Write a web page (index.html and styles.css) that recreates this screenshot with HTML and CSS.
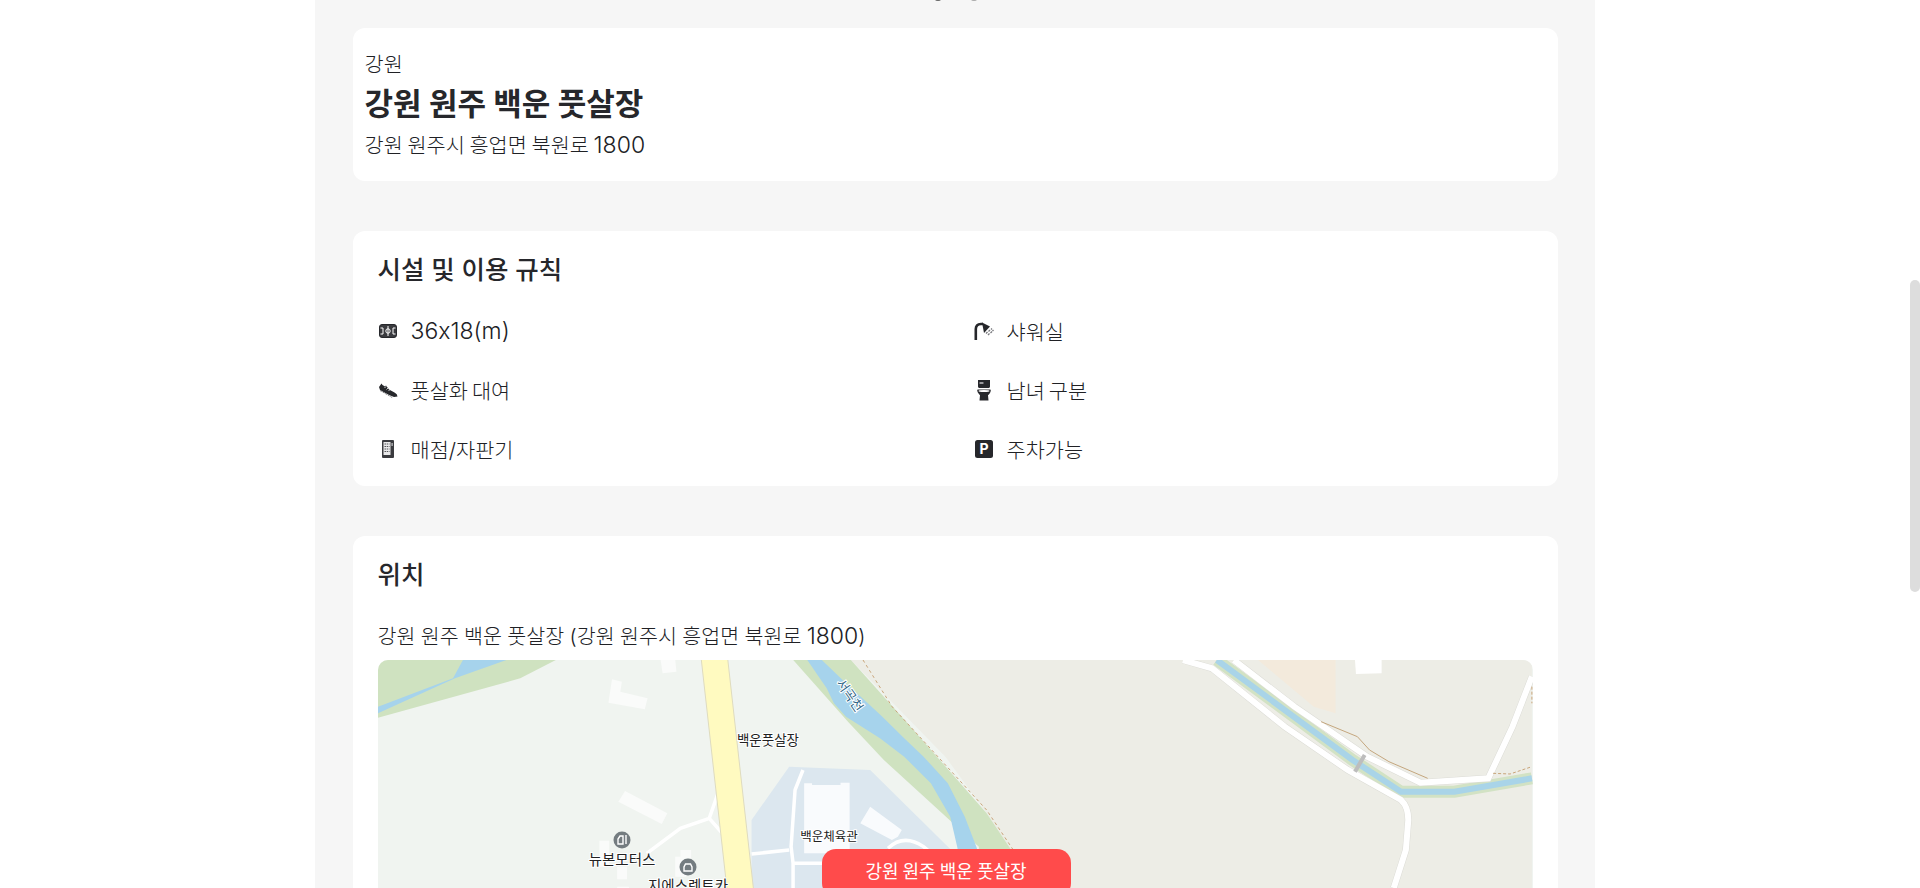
FILE: index.html
```html
<!DOCTYPE html>
<html lang="ko">
<head>
<meta charset="utf-8">
<title>강원 원주 백운 풋살장</title>
<link rel="stylesheet" href="styles.css">
</head>
<body>
<main class="page">
  <div class="clip-marks"><i></i><i></i></div>

  <section class="card head">
    <p class="region">강원</p>
    <h1>강원 원주 백운 풋살장</h1>
    <p class="addr">강원 원주시 흥업면 북원로 <span class="num">1800</span></p>
  </section>

  <section class="card facilities">
    <h2>시설 및 이용 규칙</h2>
    <ul class="grid">
      <li><svg class="ico" viewBox="0 0 20 20"><rect x="1.500" y="3.500" width="17" height="13" rx="2.500" fill="#3a3b3f" stroke="#26272b"/><g fill="none" stroke="#fff" stroke-width="1"><path d="M10 5v10"/><circle cx="10" cy="10" r="2.200"/><path d="M2.500 7h2.500v6H2.500M17.500 7H15v6h2.500"/></g></svg><span class="num">36x18(m)</span></li>
      <li><svg class="ico" viewBox="0 0 20 20"><path d="M1.800 19V8Q1.800 3.200 7 3h2" fill="none" stroke="#26272b" stroke-width="2.600"/><path d="M8 1.500 16 5.500 10 12Z" fill="#26272b"/><path d="M12 12.500l1.500-1.500M14.500 10.500l1.500-1.500M17 8.500l1-1M14 14l1.500-1.500M16.500 12l1.500-1.500M18.500 10l1-1" stroke="#77787c" stroke-width="1.300"/></svg>샤워실</li>
      <li><svg class="ico" viewBox="0 0 20 20"><path d="M1 7 3.500 3.500 4.500 5 7 6.500 8 5.500l3 4 5.500 3q3 1.500 3 4L16 17 11 15 5.500 12 2 10Z" fill="#26272b"/><path d="M6.500 8 8 6.500M8.500 9.500 10 8M10.500 11l1.500-1.500" stroke="#fff" stroke-width=".8"/><path d="M2 10.500 15 18" stroke="#8a8b8e" stroke-width="1" stroke-dasharray="2 1"/></svg>풋살화 대여</li>
      <li><svg class="ico" viewBox="0 0 20 20"><path d="M4 0h12v6.500c0 .8-.6 1.500-1.500 1.500h-9C4.600 8 4 7.300 4 6.500Z" fill="#26272b"/><rect x="5.500" y="2" width="4" height="2" rx=".5" fill="#9a9a9e"/><path d="M4 9.500h12c.5 0 1 .5.700 1.500-.5 2-1.500 3.500-2.700 4.300l.5 5.200h-9l.5-5.200C5.300 14.500 3.800 13 3.300 11c-.3-1 .2-1.500.7-1.500Z" fill="#26272b"/><ellipse cx="10" cy="11" rx="5.500" ry="1" fill="#fff"/></svg>남녀 구분</li>
      <li><svg class="ico" viewBox="0 0 20 20"><rect x="4" y="1" width="12" height="18" rx="1" fill="#3a3b3f"/><rect x="5.500" y="3" width="7" height="13" fill="#e9e9ea"/><path d="M6.500 5h5M6.500 7.500h5M6.500 10h5M6.500 12.500h5" stroke="#55565a" stroke-width="1" stroke-dasharray="1.500 .7"/><rect x="13.500" y="4" width="1.200" height="3" fill="#c9c9cc"/></svg>매점/자판기</li>
      <li><svg class="ico" viewBox="0 0 20 20"><rect x="1" y="1" width="18" height="18" rx="2.500" fill="#26272b"/><text x="10" y="15" class="pk">P</text></svg>주차가능</li>
    </ul>
  </section>

  <section class="card location">
    <h2>위치</h2>
    <p class="place">강원 원주 백운 풋살장 (강원 원주시 흥업면 북원로 <span class="num">1800</span>)</p>
    <div class="map">
      <svg class="map-art" viewBox="0 0 1155 240" aria-hidden="true">
        <rect width="1155" height="240" fill="#f0f4f0"/>
        <g transform="translate(422 -10) scale(.4847 .3333)">
          <path d="M105 30H1510V714H440L385 490 300 320Z" fill="#edede6"/>
          <path d="M945 30H1105V190L1060 170Z" fill="#f3eadc"/>
          <path d="M1145 30H1200V70L1147 72Z" fill="#fff"/>
          <path d="M-14 30H105L210 200 385 490 445 620V714H369V590L173 330 99 215Z" fill="#cfe2c0"/>
          <path d="M15 30H45L95 100 140 160 170 200 215 265 255 320 305 400 340 500 365 595 372 714H325V595L310 500 270 400 215 320 165 265 95 200 70 160 55 115Z" fill="#a6d3ec"/>
          <path d="M130 30 190 170 385 480 440 600" fill="none" stroke="#c9a57a" stroke-width="1" stroke-dasharray="3 3" vector-effect="non-scaling-stroke"/>
          <path d="M860 30 1140 330 1240 425 1350 425 1510 385" fill="none" stroke="#d2e2c4" stroke-width="12" vector-effect="non-scaling-stroke"/>
          <path d="M860 30 1140 330 1240 425 1350 425 1510 385" fill="none" stroke="#a9d4e8" stroke-width="6" vector-effect="non-scaling-stroke"/>
          <path d="M790 30 850 55 1000 230 1130 360 1240 450Q1255 470 1255 510L1250 600 1225 714" fill="none" stroke="#dcdcd6" stroke-width="7" vector-effect="non-scaling-stroke"/>
          <path d="M895 30 1020 170 1170 320 1280 398 1420 385 1470 230 1510 80" fill="none" stroke="#dcdcd6" stroke-width="7" vector-effect="non-scaling-stroke"/>
          <path d="M790 30 850 55 1000 230 1130 360 1240 450Q1255 470 1255 510L1250 600 1225 714" fill="none" stroke="#fff" stroke-width="6" vector-effect="non-scaling-stroke"/>
          <path d="M895 30 1020 170 1170 320 1280 398 1420 385 1470 230 1510 80" fill="none" stroke="#fff" stroke-width="6" vector-effect="non-scaling-stroke"/>
          <path d="M1165 315 1145 365" fill="none" stroke="#bdbdbd" stroke-width="4" vector-effect="non-scaling-stroke"/>
          <path d="M1075 215 1150 260 1175 300 1215 335 1295 385" fill="none" stroke="#c4a67e" stroke-width="1" vector-effect="non-scaling-stroke"/>
          <path d="M1430 370 1465 372 1510 350M1510 110V160" fill="none" stroke="#c9a57a" stroke-width="1" stroke-dasharray="3 2" vector-effect="non-scaling-stroke"/>
        </g>
        <g transform="translate(-8 -10) scale(.3954 .3333)">
          <path d="M20 30H470L380 85 20 203Z" fill="#cfe2c0"/>
          <path d="M20 170 210 85 235 30H345L215 85 20 190Z" fill="#a6d3ec"/>
          <path d="M735 30H772L775 65 740 70ZM612 88 637 95 633 125 702 145 695 178 603 158ZM645 423 752 490 738 522 628 455ZM580 572H605V650H580ZM625 650H650V688H625ZM785 600H812V625H785ZM772 620H800V680H772ZM625 710H655V740H625Z" fill="#fafbfa"/>
          <path d="M1060 350 1265 360 1470 600V740H965V510Z" fill="#dce7ef"/>
          <path d="M1098 400H1118V405H1190V398H1213V610H1098ZM1265 470 1345 540 1335 560 1320 570 1240 520Z" fill="#f9fbfd"/>
          <path d="M1095 360 1075 420 1065 590 1070 640H1145M965 612 1060 600M1070 640V740M1310 595Q1350 550 1400 590L1450 640M880 430 858 505 785 535 700 610M858 505 895 555" fill="none" stroke="#fff" stroke-width="3.500" vector-effect="non-scaling-stroke"/>
          <path d="M838 30H905L972 740H905Z" fill="#fffac0"/>
          <path d="M838 30 905 740M905 30 972 740" fill="none" stroke="#dedbbf" stroke-width="1" vector-effect="non-scaling-stroke"/>
        </g>
        <circle cx="244" cy="180" r="8.500" fill="#747c80"/>
        <circle cx="310" cy="207" r="8.500" fill="#747c80"/>
        <path d="M240 184v-5l2-3h3v8ZM248 175v9" fill="none" stroke="#fff" stroke-width="1.400"/>
        <path d="M306 211v-4l1.500-3h5l1.500 3v4Z" fill="none" stroke="#fff" stroke-width="1.400"/>
        <g class="labels">
          <text x="390" y="85" class="mid">백운풋살장</text>
          <text x="451" y="181" class="small">백운체육관</text>
          <text x="244" y="205" class="big">뉴본모터스</text>
          <text x="310" y="231" class="big">지에스렌트카</text>
          <text x="0" y="0" class="river" transform="translate(468 38) rotate(55)">서곡천</text>
        </g>
      </svg>
      <div class="map-pin">강원 원주 백운 풋살장</div>
    </div>
  </section>
</main>
<div class="scrollbar"></div>
</body>
</html>
```
FILE: styles.css
```css
* { box-sizing: border-box; margin: 0; padding: 0; }
html, body { height: 888px; overflow: hidden; background: #fff; }
body {
  font-family: Inter, "Noto Sans CJK KR", sans-serif;
  font-feature-settings: "calt" 0;
  color: #202125;
  padding-right: 10px;
}
.page {
  position: relative;
  width: 1280px;
  height: 888px;
  margin: 0 auto;
  padding: 28px 37.5px 0;
  background: #f6f6f6;
  overflow: hidden;
}
.clip-marks i {
  position: absolute;
  top: -2px;
  width: 6px;
  height: 3px;
  border-radius: 50%;
  background: #666;
}
.clip-marks i:first-child { left: 620px; }
.clip-marks i:last-child { left: 656px; background: #aaa; }
.card {
  background: #fff;
  border-radius: 12px;
  margin-bottom: 50px;
}
.num { font-size: 23px; font-weight: 300; line-height: 1; }
.head { height: 153px; padding: 24px 12px 0; }
.region { font-size: 20.800px; line-height: 26px; font-weight: 300; }
h1 { font-size: 31px; line-height: 44px; font-weight: 700; margin-top: 4px; color: #26272b; }
.addr { font-size: 20.800px; line-height: 30px; font-weight: 300; margin-top: 5px; word-spacing: -1.200px; }
h2 { font-size: 25.500px; line-height: 36px; font-weight: 500; color: #26272b; }
.facilities { height: 255px; padding: 21px 25px 0; }
.grid {
  list-style: none;
  display: grid;
  grid-template-columns: 559px 559px;
  column-gap: 37px;
  row-gap: 35px;
  margin-top: 31px;
}
.grid li {
  display: flex;
  align-items: center;
  gap: 13px;
  height: 24px;
  font-size: 20.800px;
  font-weight: 300;
  word-spacing: -1.800px;
}
.ico { width: 20px; height: 20px; flex: none; overflow: visible; }
.pk { font: 700 14px Inter, sans-serif; fill: #fff; text-anchor: middle; }
.location { height: 400px; padding: 21px 25px 0; }
.place { font-size: 20.600px; line-height: 30px; font-weight: 300; margin-top: 29px; word-spacing: -.4px; }
.map {
  position: relative;
  height: 240px;
  margin-top: 8px;
  border-radius: 10px 10px 0 0;
  overflow: hidden;
}
.map-art { display: block; width: 1155px; height: 240px; }
.labels text {
  font-family: "Noto Sans CJK KR", sans-serif;
  font-size: 12px;
  text-anchor: middle;
  fill: #222;
  stroke: #fff;
  stroke-width: 2px;
  paint-order: stroke;
}
.labels .mid { font-size: 13.500px; }
.labels .small { font-size: 12.500px; }
.labels .big { font-size: 14.500px; }
.labels .river { fill: #2f6485; font-size: 13px; }
.map-pin {
  position: absolute;
  left: 444px;
  top: 189px;
  width: 249px;
  height: 48px;
  border-radius: 14px;
  background: #ff4b4b;
  color: #fff;
  font-size: 18px;
  font-weight: 400;
  word-spacing: -1px;
  line-height: 46px;
  text-align: center;
}
.scrollbar {
  position: fixed;
  right: 0;
  top: 280px;
  width: 10px;
  height: 312px;
  border-radius: 5px;
  background: #ddd;
}
```
